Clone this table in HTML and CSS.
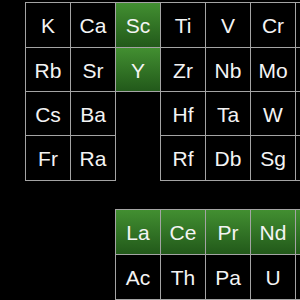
FILE: index.html
```html
<!DOCTYPE html>
<html>
<head>
<meta charset="utf-8">
<link rel="stylesheet" href="styles.css">
</head>
<body>
<div class="page">
  <div class="main">
    <div class="cell">K</div><div class="cell">Ca</div><div class="cell green">Sc</div><div class="cell">Ti</div><div class="cell">V</div><div class="cell">Cr</div><div class="cell"></div>
    <div class="cell">Rb</div><div class="cell">Sr</div><div class="cell green">Y</div><div class="cell">Zr</div><div class="cell">Nb</div><div class="cell">Mo</div><div class="cell"></div>
    <div class="cell">Cs</div><div class="cell">Ba</div><div class="hole"></div><div class="cell">Hf</div><div class="cell">Ta</div><div class="cell">W</div><div class="cell"></div>
    <div class="cell">Fr</div><div class="cell">Ra</div><div class="hole"></div><div class="cell">Rf</div><div class="cell">Db</div><div class="cell">Sg</div><div class="cell"></div>
  </div>
  <div class="fblock">
    <div class="cell green">La</div><div class="cell green">Ce</div><div class="cell green">Pr</div><div class="cell green">Nd</div><div class="cell green"></div>
    <div class="cell">Ac</div><div class="cell">Th</div><div class="cell">Pa</div><div class="cell">U</div><div class="cell"></div>
  </div>
</div>
</body>
</html>
```
FILE: styles.css
```css
html, body {
  margin: 0;
  padding: 0;
  background: #000;
}
.page {
  width: 300px;
  height: 300px;
  overflow: hidden;
  padding-top: 3px;
  box-sizing: border-box;
  font-family: "Liberation Sans", Arial, sans-serif;
  color: #f4f4f4;
}
.main {
  display: grid;
  grid-template-columns: repeat(7, 44px);
  grid-template-rows: 44px 43px 43px 44px;
  gap: 1px;
  margin-left: 26px;
  width: max-content;
}
.fblock {
  display: grid;
  grid-template-columns: repeat(5, 44px);
  grid-template-rows: 44px 44px;
  gap: 1px;
  margin-left: 116px;
  margin-top: 30px;
  width: max-content;
}
.cell {
  display: flex;
  align-items: center;
  justify-content: center;
  font-size: 21px;
  background: #000;
  outline: 1px solid #a4a4a4;
  padding-top: 2px;
  box-sizing: border-box;
}
.green {
  background: linear-gradient(#428f31, #22591a);
}
.hole {
  background: #000;
}
```
